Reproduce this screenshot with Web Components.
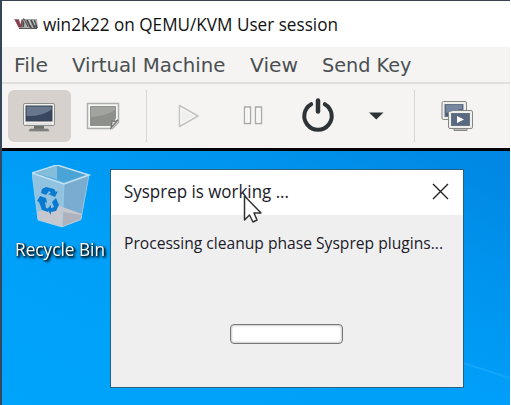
<!DOCTYPE html>
<html lang="en"><head><meta charset="utf-8"><title>win2k22 on QEMU/KVM User session</title>
<style>html,body{margin:0;height:100%;overflow:hidden;background:#fff}</style></head>
<body><vm-window></vm-window>
<script>
class Base extends HTMLElement {
  connectedCallback() {
    if (this.shadowRoot) return;
    this.attachShadow({ mode: 'open' }).innerHTML = this.render();
  }
}

/* A line of text set to an exact advance width. */
customElements.define('ui-label', class extends Base {
  render() {
    const a = n => this.getAttribute(n);
    return `<style>:host{display:block;flex:none;width:${a('w')}px;height:26px}
      svg{display:block;overflow:visible}text{white-space:pre;font-family:inherit;fill:currentColor}</style>
      <svg width="${a('w')}" height="26"><text x="0" y="${a('base') || 20}" font-size="${a('size')}" textLength="${a('w')}" lengthAdjust="spacingAndGlyphs">${this.textContent}</text></svg>`;
  }
});

customElements.define('title-bar', class extends Base {
  render() {
    return `<style>:host{display:flex;height:46px;background:#fff;color:#111;font-family:"Open Sans","Noto Sans",sans-serif;padding-left:12px;box-sizing:border-box}
      svg{flex:none;width:24px;height:12px;margin:17px 5px 0 0}ui-label{margin-top:10px}</style>
      <svg viewBox="0 0 24 12"><path d="M0 1h5l2 6 2-6h14l1 9H6z" fill="#aaa"/>
      <path d="M.5 1.500h4l2 5 1-5h2l-2 8h-3z" fill="#87434f"/><path d="M9 9l1-7 4 7M13 2l4 8M17 2l4 8M20 2l3 8" stroke="#4d4d4d" stroke-width="1.700" fill="none"/><path d="M9.500 2l4 8M15 2l2 5M19 2l2 5" stroke="#ddd" stroke-width=".8"/><path d="M5 10.500h18" stroke="#555"/></svg>
      <ui-label w="295" size="17.500">win2k22 on QEMU/KVM User session</ui-label>`;
  }
});

customElements.define('menu-bar', class extends Base {
  render() {
    return `<style>:host{display:flex;box-sizing:border-box;height:37px;padding:5px 0 0 12px;background:#f5f4f3;border-bottom:2px solid #e0dfdd;color:#4a5052;font-family:"DejaVu Sans",sans-serif;gap:24px}</style>
      <ui-label w="34" size="19.300">File</ui-label>
      <ui-label w="153.500" size="19.300">Virtual Machine</ui-label>
      <ui-label w="48" size="19.300">View</ui-label>
      <ui-label w="89.500" size="19.300">Send Key</ui-label>`;
  }
});

const icons = {
  monitor: `<rect x="4.500" y="4.500" width="31" height="22" rx="1.500" fill="#f2f2f0" stroke="#8c8e8b"/><rect x="7" y="7" width="26" height="15" fill="#39485f" stroke="#39414c"/><path d="M7.500 7.500h25v3Q22 18 7.500 17z" fill="#66778e"/><path d="M7 25h26" stroke="#cfcfcc"/><path d="M15 27h10v3H15z" fill="#6e706e"/><path d="M11 30h18l1 2H10z" fill="#777976" stroke="#8c8e8b" stroke-width=".8"/>`,
  details: `<path d="M4.500 4.500h31v19l-6 6h-25z" fill="#f7f7f5" stroke="#adafab" stroke-width="1.500"/><path d="M7.500 7.500h25v12l-4 7h-21z" fill="#a2a49f" stroke="#8e908c"/><path d="M8 18q15-1 24-7v8l-4 7H8z" fill="#8e908b"/><path d="M28 29l1-7q3 1 6-1z" fill="#d7d8d4" stroke="#747772" stroke-width="1.300"/>`,
  play: `<path d="M11.500 6.500v21l18.500-10.500z" fill="#eff0ee" stroke="#c3c5c2" stroke-width="1.600" stroke-linejoin="round"/><path d="M13 9v16l14-8z" fill="none" stroke="#fbfbfa"/>`,
  pause: `<g fill="#f2f2f1" stroke="#a9aba8" stroke-width="1.400"><path d="M11.500 8h6v16.500h-6zM22.500 8h6v16.500h-6z"/></g><path d="M13 9.500h3v13.500h-3zM24 9.500h3v13.500h-3z" stroke="#fff" fill="none"/>`,
  power: `<path d="M13.200 5.200a13.700 13.700 0 1 0 13.600 0" fill="none" stroke="#2e3436" stroke-width="4" stroke-linecap="round"/><path d="M20 1.500v11" stroke="#2e3436" stroke-width="4.500" stroke-linecap="round"/>`,
  caret: `<path d="M13 13.500h14.500l-7.250 7z" fill="#2e3436"/>`,
  screens: `<g stroke="#858783" fill="#eeeeeb"><rect x="5" y="2.500" width="24.500" height="18" rx="1.500"/><rect x="8" y="5.500" width="18" height="12" fill="#4b5b72" stroke="#687385"/><path d="M17 29.500h13v2H17z" fill="#b9bbb7"/><rect x="11.500" y="11.500" width="24" height="18" rx="1.500"/><rect x="14.500" y="14.500" width="18" height="12" fill="#586980" stroke="#687385"/></g><path d="M9 6h16v4q-7 1-16 4z" fill="#7586a0"/><path d="M20 17v7l7-3.500z" fill="#fff"/>`
};
customElements.define('tool-button', class extends Base {
  render() {
    return `<style>:host{display:block;flex:none;box-sizing:border-box;width:63px;height:52px;border-radius:6px;padding:9px 11px}
      :host([active]){background:#d6d1cd}svg{display:block;overflow:visible}</style>
      <svg width="40" height="34">${icons[this.getAttribute('icon')]}</svg>`;
  }
});

customElements.define('tool-bar', class extends Base {
  render() {
    return `<style>:host{display:flex;box-sizing:border-box;height:67px;padding:6px 0 0 6px;background:#f5f4f3;border-bottom:3px solid #000}
      i{width:1px;height:52px;background:#d8d6d3;flex:none}</style>
      <tool-button icon="monitor" active></tool-button>
      <tool-button icon="details" style="margin-left:1px"></tool-button>
      <i style="margin-left:11px"></i>
      <tool-button icon="play" style="margin-left:10px"></tool-button>
      <tool-button icon="pause" style="margin-left:2px"></tool-button>
      <tool-button icon="power" style="margin-left:2px"></tool-button>
      <tool-button icon="caret" style="margin-left:-5px"></tool-button>
      <i style="margin-left:6px"></i>
      <tool-button icon="screens" style="margin-left:11px"></tool-button>`;
  }
});

customElements.define('recycle-bin', class extends Base {
  render() {
    return `<style>:host{display:block;width:92px;color:#fff;font-family:"Open Sans","Noto Sans",sans-serif}
      svg{display:block;margin-left:17px}ui-label{filter:drop-shadow(1px 1px 1px #000) drop-shadow(1px 1px 1px #000a)}</style>
      <svg width="60" height="66" viewBox="0 0 60 66">
      <path d="M0 8l32 11-2 43-24-7z" fill="#91c3e1"/><path d="M32 19l25-9-8 44-19 8z" fill="#79acd0"/>
      <path d="M5 47l20-7 25 9-1 6-19 7-24-7z" fill="#c7c8cf"/><path d="M31 47l19 3-1 5-19 7z" fill="#adb2bd"/>
      <path d="M0 8L25 0l32 10-25 9z" fill="#58afe0" stroke="#c6e0ef" stroke-width="1.500"/><path d="M3 8l22-7v13z" fill="#84bddc"/><path d="M25 1l28 9-21 7-7-3z" fill="#4ba4d6"/>
      <path d="M0 8l6 47 24 7 19-8 8-44M32 19l-2 43" fill="none" stroke="#aad1e7" stroke-width=".8"/>
      <g fill="#087bd1"><path d="M10 24l4-2 8 2 2 3 2-1-3 6-7-3 3-1-2-2-3 4-5-2z"/><path d="M8 31l6 2 1 5-2-1 1 6 3 1-1 3-6-2-3-8-2-1z"/><path d="M24 33l3 7-3 6-5 1v3l-4-6 4-4v3l3-1-2-5z"/></g></svg>
      <ui-label w="90" size="17.500" base="25">Recycle Bin</ui-label>`;
  }
});

customElements.define('sysprep-dialog', class extends Base {
  render() {
    return `<style>:host{display:flex;flex-direction:column;box-sizing:border-box;width:354px;height:219px;border:1.500px solid #246283;background:#efefef;color:#20202a;font-family:"Open Sans","Noto Sans",sans-serif}
      header{display:flex;justify-content:space-between;height:45px;background:#fff;padding:0 14px 0 13px;flex:none}
      header ui-label{margin-top:8px}header svg{margin-top:12px}
      .msg{margin:19px 0 0 13px}
      .bar{box-sizing:border-box;width:113px;height:20px;margin:64px 0 0 118.500px;border:1.500px solid #777;border-radius:4px;background:#fff;box-shadow:inset 0 0 2px 1px #ccc}</style>
      <header><ui-label w="165" size="18">Sysprep is working ...</ui-label>
      <svg width="18" height="18"><path d="M2 2l15 15M17 2L2 17" stroke="#222" stroke-width="1.400"/></svg></header>
      <ui-label class="msg" w="319" size="17" base="15">Processing cleanup phase Sysprep plugins...</ui-label>
      <div class="bar"></div>`;
  }
});

customElements.define('guest-desktop', class extends Base {
  render() {
    return `<style>:host{display:block;position:relative;flex:1;overflow:hidden;background:linear-gradient(205deg,#0088e4 5%,#0094ee 28%,#009ff8 55%,#00a4fb)}
      recycle-bin{position:absolute;left:13px;top:14px}
      sysprep-dialog{position:absolute;left:108px;top:18px}
      .cursor{position:absolute;left:241px;top:43px}.ray{position:absolute;right:0;bottom:0}</style>
      <svg class="ray" width="50" height="60"><path d="M0 17l50 17v26H0z" fill="#00a3ff" opacity=".25"/><path d="M0 17l50 16" stroke="#20aaff" opacity=".6" stroke-width="2"/></svg>
      <recycle-bin></recycle-bin><sysprep-dialog></sysprep-dialog>
      <svg class="cursor" width="20" height="32"><path d="M1.500 2v24l5-5 3.500 7 4-2-3-7h7z" fill="#fff" stroke="#333" stroke-width="1.500" stroke-linejoin="round"/></svg>`;
  }
});

customElements.define('vm-window', class extends Base {
  render() {
    return `<style>:host{display:flex;flex-direction:column;box-sizing:border-box;width:510px;height:405px;border-top:1px solid #3d4252;border-left:2px solid #34475c;background:#000}
      title-bar,menu-bar,tool-bar{flex:none}</style>
      <title-bar></title-bar><menu-bar></menu-bar><tool-bar></tool-bar><guest-desktop></guest-desktop>`;
  }
});
</script></body></html>
